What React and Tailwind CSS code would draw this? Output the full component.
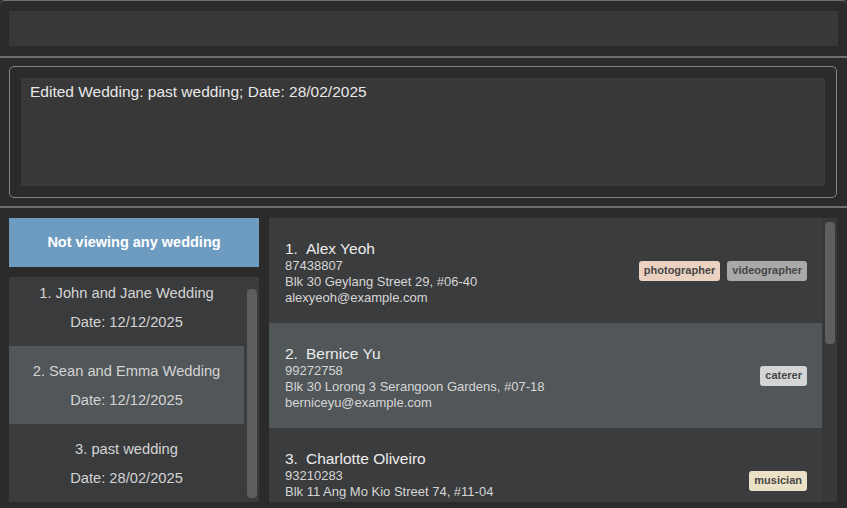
import React from "react";

const weddings = [
  { title: "1. John and Jane Wedding", date: "Date: 12/12/2025", selected: false },
  { title: "2. Sean and Emma Wedding", date: "Date: 12/12/2025", selected: true },
  { title: "3. past wedding", date: "Date: 28/02/2025", selected: false },
];

const persons = [
  {
    id: "1.",
    name: "Alex Yeoh",
    phone: "87438807",
    address: "Blk 30 Geylang Street 29, #06-40",
    email: "alexyeoh@example.com",
    tags: [
      { label: "photographer", cls: "bg-[#ebd1c0]" },
      { label: "videographer", cls: "bg-[#a9a9a9]" },
    ],
    selected: false,
  },
  {
    id: "2.",
    name: "Bernice Yu",
    phone: "99272758",
    address: "Blk 30 Lorong 3 Serangoon Gardens, #07-18",
    email: "berniceyu@example.com",
    tags: [{ label: "caterer", cls: "bg-[#d5d5d5]" }],
    selected: true,
  },
  {
    id: "3.",
    name: "Charlotte Oliveiro",
    phone: "93210283",
    address: "Blk 11 Ang Mo Kio Street 74, #11-04",
    email: null,
    tags: [{ label: "musician", cls: "bg-[#ebe1c6]" }],
    selected: false,
  },
];

export default function App() {
  return (
    <div className="w-[847px] h-[508px] bg-[#2b2b2b] flex flex-col overflow-hidden font-['Liberation_Sans',Arial,sans-serif]">
      {/* Command box */}
      <div className="h-[56px] shrink-0 border-t border-[#707070] rounded-t-[5px] pl-[9px] pr-[9px] pt-[10px]">
        <div className="h-[35px] bg-[#383838]" />
      </div>
      <div className="h-[2px] shrink-0 bg-[#6f6f6f]" />

      {/* Result display */}
      <div className="h-[148px] shrink-0 pl-[9px] pr-[10px] pt-[8px]">
        <div className="h-[132px] border border-[#858585] rounded-[5px] p-[11px]">
          <div className="h-full bg-[#383838] pl-[9px] pt-[5px] text-[15.5px] leading-[18px] text-[#e8e8e8]">
            Edited Wedding: past wedding; Date: 28/02/2025
          </div>
        </div>
      </div>
      <div className="h-[2px] shrink-0 bg-[#6f6f6f]" />

      {/* Bottom area */}
      <div className="flex-1 flex pl-[9px] pr-[10px] pt-[10px] pb-[6px] gap-[10px] min-h-0">
        {/* Left column */}
        <div className="w-[250px] flex flex-col gap-[10px]">
          <div className="h-[49px] shrink-0 bg-[#6e9bc0] flex items-center justify-center text-white font-bold text-[14.5px]">
            Not viewing any wedding
          </div>
          <div className="flex-1 flex bg-[#3a3b3d] overflow-hidden min-h-0">
            <div className="w-[235px] overflow-hidden">
              <div className="-mt-[9px]">
                {weddings.map((w, i) => (
                  <div
                    key={i}
                    className={`h-[78px] flex flex-col items-center justify-center pt-[1px] text-[14.7px] leading-[29px] text-[#d4d4d4] ${
                      w.selected ? "bg-[#515659]" : "bg-[#3a3b3d]"
                    }`}
                  >
                    <div>{w.title}</div>
                    <div>{w.date}</div>
                  </div>
                ))}
              </div>
            </div>
            <div className="w-[15px] pt-[12px] pl-[3px]">
              <div className="w-[10px] h-[209px] rounded-[4px] bg-[#5e5e5e]" />
            </div>
          </div>
        </div>

        {/* Right column */}
        <div className="w-[568px] flex bg-[#37383a] overflow-hidden">
          <div className="w-[553px] overflow-hidden">
            {persons.map((p, i) => (
              <div
                key={i}
                className={`h-[105px] shrink-0 flex items-center pl-[16px] pr-[15px] ${
                  p.selected ? "bg-[#515659]" : "bg-[#3b3c3e]"
                }`}
              >
                <div className="flex-1 self-start pt-[21px]">
                  <div className="text-[15.5px] leading-[19px] text-[#ececec] flex gap-[8px]">
                    <span>{p.id}</span>
                    <span>{p.name}</span>
                  </div>
                  <div className="text-[13px] leading-[16px] text-[#d6d6d6]">{p.phone}</div>
                  <div className="text-[13px] leading-[16px] text-[#d6d6d6]">{p.address}</div>
                  {p.email && (
                    <div className="text-[13px] leading-[16px] text-[#d6d6d6]">{p.email}</div>
                  )}
                </div>
                <div className="flex gap-[7px]">
                  {p.tags.map((t) => (
                    <span
                      key={t.label}
                      className={`h-[20px] px-[5px] flex items-center rounded-[3px] text-[11px] font-bold text-[#474747] ${t.cls}`}
                    >
                      {t.label}
                    </span>
                  ))}
                </div>
              </div>
            ))}
          </div>
          <div className="w-[15px] pt-[4px] pl-[3px]">
            <div className="w-[10px] h-[122px] rounded-[4px] bg-[#5e5e5e]" />
          </div>
        </div>
      </div>
    </div>
  );
}
